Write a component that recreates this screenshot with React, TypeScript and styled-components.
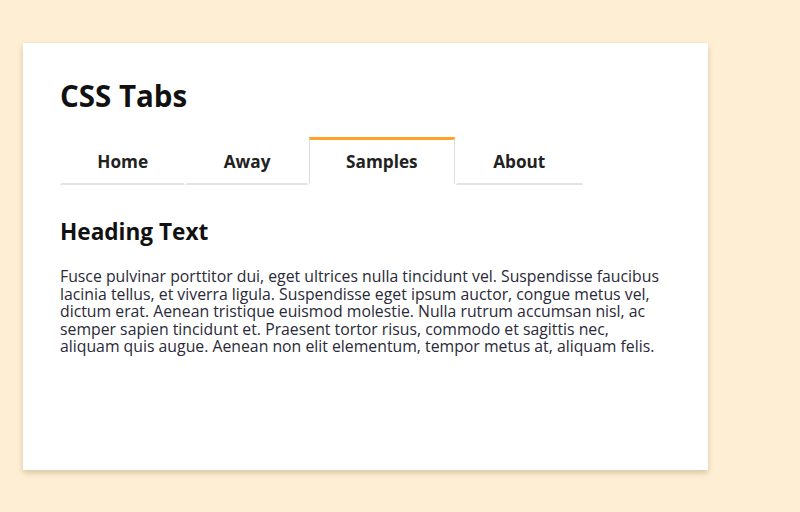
import React, { useState } from "react";
import styled, { createGlobalStyle } from "styled-components";

const Global = createGlobalStyle`
  html, body { margin: 0; padding: 0; }
  body {
    background: #feefd4;
    font-family: "Open Sans", "Noto Sans", sans-serif;
    color: #111;
  }
`;

const Page = styled.div`
  width: 800px;
  height: 512px;
  padding: 43px 0 0 23px;
  box-sizing: border-box;
`;

const Card = styled.div`
  width: 685px;
  height: 427px;
  box-sizing: border-box;
  background: #fff;
  padding: 33px 37px 0 37px;
  box-shadow: 0 3px 6px rgba(150, 120, 80, 0.35);
  display: flex;
  flex-direction: column;
`;

const Title = styled.h1`
  margin: 0;
  font-size: 29.5px;
  line-height: 40px;
  font-weight: 700;
  color: #111;
`;

const TabBar = styled.div`
  display: flex;
  margin-top: 21px;
  gap: 1px;
`;

const Tab = styled.button<{ $active?: boolean }>`
  font-family: inherit;
  font-size: 17.2px;
  font-weight: 700;
  color: #222;
  background: #fff;
  padding: 0 36.3px;
  height: 48px;
  box-sizing: border-box;
  cursor: pointer;
  border: none;
  border-top: 3px solid ${(p) => (p.$active ? "#ffa32b" : "transparent")};
  border-left: 1px solid ${(p) => (p.$active ? "#dcdcdc" : "transparent")};
  border-right: 1px solid ${(p) => (p.$active ? "#dcdcdc" : "transparent")};
  border-bottom: 2px solid ${(p) => (p.$active ? "transparent" : "#e3e3e3")};
`;

const Panel = styled.div`
  padding-top: 32px;
`;

const Heading = styled.h2`
  margin: 0;
  font-size: 22.6px;
  line-height: 30px;
  font-weight: 700;
  color: #111;
`;

const Body = styled.p`
  margin: 21px 0 0;
  font-size: 15.8px;
  line-height: 17.6px;
  color: #2a2a38;
  width: 611px;
`;

const tabs = ["Home", "Away", "Samples", "About"];

export default function App() {
  const [active, setActive] = useState(2);
  return (
    <>
      <Global />
      <Page>
        <Card>
          <Title>CSS Tabs</Title>
          <TabBar>
            {tabs.map((t, i) => (
              <Tab key={t} $active={i === active} onClick={() => setActive(i)}>
                {t}
              </Tab>
            ))}
          </TabBar>
          <Panel>
            <Heading>Heading Text</Heading>
            <Body>
              Fusce pulvinar porttitor dui, eget ultrices nulla tincidunt vel. Suspendisse faucibus
              lacinia tellus, et viverra ligula. Suspendisse eget ipsum auctor, congue metus vel,
              dictum erat. Aenean tristique euismod molestie. Nulla rutrum accumsan nisl, ac
              semper sapien tincidunt et. Praesent tortor risus, commodo et sagittis nec,
              aliquam quis augue. Aenean non elit elementum, tempor metus at, aliquam felis.
            </Body>
          </Panel>
        </Card>
      </Page>
    </>
  );
}
